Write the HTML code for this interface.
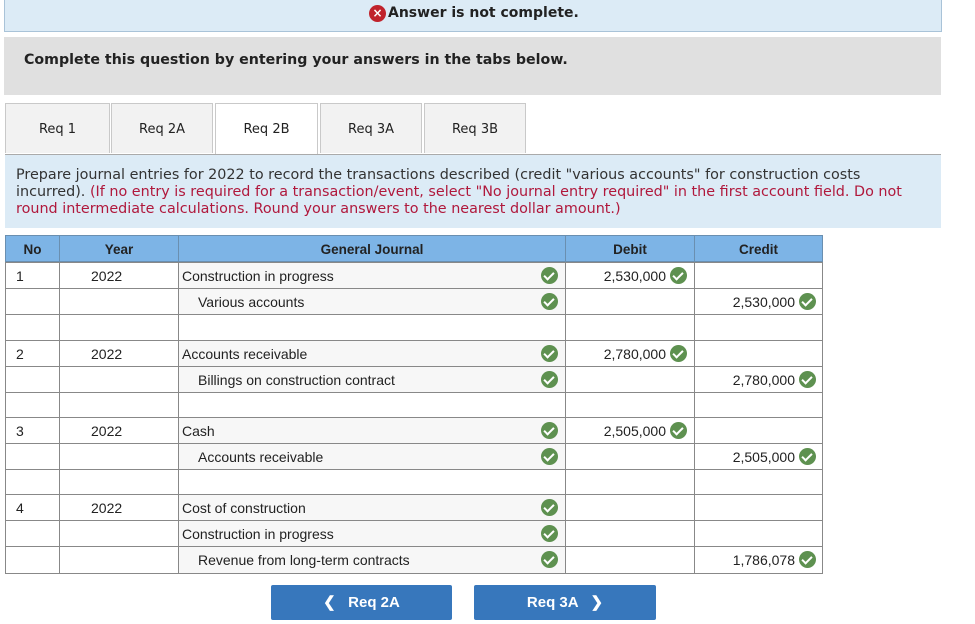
<!DOCTYPE html>
<html><head><meta charset="utf-8"><style>
body{margin:0;width:975px;height:624px;background:#fff;position:relative;overflow:hidden;font-family:"Liberation Sans",Arial,sans-serif;}
.abs{position:absolute;}
.banner{left:4px;top:0;width:936px;height:31px;background:#dcebf6;border:1px solid #a9c3d8;border-top:none;}
.banner span{position:absolute;left:366px;top:5px;font:bold 14px "DejaVu Sans",Verdana,sans-serif;color:#222;}
.xic{position:absolute;left:364px;top:5px;width:17px;height:17px;border-radius:50%;background:#c0232c;color:#fff;font:bold 12px "DejaVu Sans",sans-serif;text-align:center;line-height:17px;}
.gray{left:4px;top:37px;width:937px;height:58px;background:#e0e0e0;}
.gray span{position:absolute;left:20px;top:15px;font:bold 14.2px "DejaVu Sans",Verdana,sans-serif;color:#222;}
.tab{top:103px;height:50px;background:#f2f2f2;border:1px solid #c9c9c9;border-bottom:none;font:13px "DejaVu Sans",Verdana,sans-serif;color:#222;text-align:center;line-height:52px;box-sizing:border-box;}
.tab.act{background:#fff;height:52px;}
.instr{left:5px;top:154px;width:936px;height:74px;background:#dcebf6;border-top:1px solid #aaa;box-sizing:border-box;font:14.35px/17px "DejaVu Sans",Verdana,sans-serif;color:#333;padding:12px 0 0 11px;white-space:nowrap;}
.red{color:#b0183c;}
.hd{top:235px;height:27px;background:#7db4e6;border:1px solid #6a8fb0;box-sizing:border-box;font:bold 13.5px "Liberation Sans",Arial,sans-serif;color:#222;text-align:center;line-height:27px;}
.c{position:absolute;border:1px solid #888;box-sizing:border-box;font-size:14px;color:#222;line-height:26px;white-space:nowrap;}
.g{background:#f7f7f7;}
.ck{position:absolute;width:17px;height:17px;border-radius:50%;background:#5e9150;}
.ck:after{content:"";position:absolute;left:5px;top:3px;width:4px;height:8px;border:solid #fff;border-width:0 2.5px 2.5px 0;transform:rotate(45deg);}
.btn{top:585px;height:35px;background:#3777bc;border-radius:2px;color:#fff;font:bold 15px "Liberation Sans",Arial,sans-serif;line-height:35px;text-align:center;}
</style></head><body>
<div class="abs banner"><div class="xic">×</div><span style="left:383px">Answer is not complete.</span></div>
<div class="abs gray"><span>Complete this question by entering your answers in the tabs below.</span></div>
<div class="abs tab" style="left:5px;width:105px">Req 1</div>
<div class="abs tab" style="left:111px;width:102px">Req 2A</div>
<div class="abs tab act" style="left:215px;width:103px">Req 2B</div>
<div class="abs tab" style="left:320px;width:102px">Req 3A</div>
<div class="abs tab" style="left:424px;width:102px">Req 3B</div>
<div class="abs instr">Prepare journal entries for 2022 to record the transactions described (credit "various accounts" for construction costs<br>incurred). <span class="red">(If no entry is required for a transaction/event, select "No journal entry required" in the first account field. Do not<br>round intermediate calculations. Round your answers to the nearest dollar amount.)</span></div>

<div class="abs hd" style="left:5px;width:55px">No</div>
<div class="abs hd" style="left:59px;width:120px">Year</div>
<div class="abs hd" style="left:178px;width:388px">General Journal</div>
<div class="abs hd" style="left:565px;width:130px">Debit</div>
<div class="abs hd" style="left:694px;width:129px">Credit</div>

<div id="rows"></div>
<script>
var tops=[262,288,314,340,366,392,417,443,469,494,520,546,573];
var data=[
["1","2022","Construction in progress",0,"2,530,000",""],
["","","Various accounts",1,"","2,530,000"],
null,
["2","2022","Accounts receivable",0,"2,780,000",""],
["","","Billings on construction contract",1,"","2,780,000"],
null,
["3","2022","Cash",0,"2,505,000",""],
["","","Accounts receivable",1,"","2,505,000"],
null,
["4","2022","Cost of construction",0,"",""],
["","","Construction in progress",0,"",""],
["","","Revenue from long-term contracts",1,"","1,786,078"]];
var h="";
for(var i=0;i<12;i++){var t=tops[i],ht=tops[i+1]-t+1,d=data[i]||["","","",0,"",""];var g=data[i]?" g":"";
h+='<div class="c" style="left:5px;top:'+t+'px;width:55px;height:'+ht+'px;padding-left:10px">'+d[0]+'</div>';
h+='<div class="c" style="left:59px;top:'+t+'px;width:120px;height:'+ht+'px;padding-left:31px">'+d[1]+'</div>';
h+='<div class="c'+g+'" style="left:178px;top:'+t+'px;width:388px;height:'+ht+'px;padding-left:'+(d[3]?19:3)+'px">'+d[2]+(data[i]?'<span class="ck" style="left:362px;top:4px"></span>':'')+'</div>';
h+='<div class="c" style="left:565px;top:'+t+'px;width:130px;height:'+ht+'px;text-align:right;padding-right:28px">'+d[4]+(d[4]?'<span class="ck" style="left:104px;top:4px"></span>':'')+'</div>';
h+='<div class="c" style="left:694px;top:'+t+'px;width:129px;height:'+ht+'px;text-align:right;padding-right:27px">'+d[5]+(d[5]?'<span class="ck" style="left:104px;top:4px"></span>':'')+'</div>';
}
document.getElementById("rows").innerHTML=h;
</script>
<div class="abs btn" style="left:271px;width:181px">&#10094;&nbsp;&nbsp; Req 2A</div>
<div class="abs btn" style="left:474px;width:182px">Req 3A &nbsp;&nbsp;&#10095;</div>
</body></html>
